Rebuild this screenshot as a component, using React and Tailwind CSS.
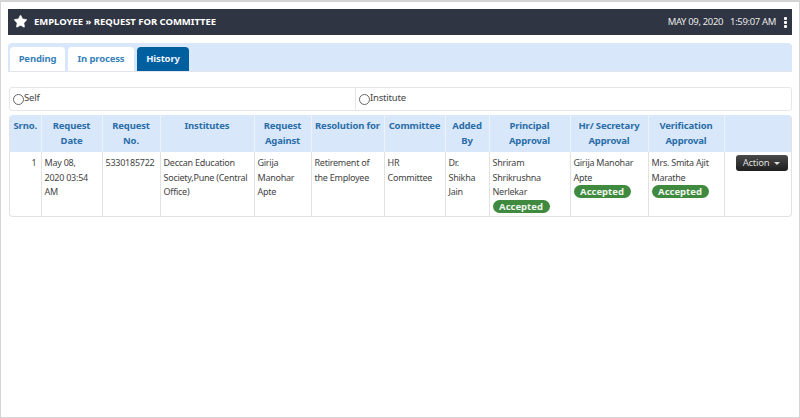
import { Star } from "lucide-react";

const columns = [
  { label: "Srno.", width: "w-[31px]" },
  { label: "Request Date", width: "w-[61px]" },
  { label: "Request No.", width: "w-[58px]" },
  { label: "Institutes", width: "w-[94px]" },
  { label: "Request Against", width: "w-[57px]" },
  { label: "Resolution for", width: "w-[73px]" },
  { label: "Committee", width: "w-[61px]" },
  { label: "Added By", width: "w-[44px]" },
  { label: "Principal Approval", width: "w-[81px]" },
  { label: "Hr/ Secretary Approval", width: "w-[78px]" },
  { label: "Verification Approval", width: "w-[76px]" },
  { label: "", width: "w-[69px]" },
];

const Accepted = () => (
  <span className="block w-[57px] h-[13px] rounded-full bg-[#3f8a3f] text-[#eef5ee] text-[9.5px] leading-[13px] tracking-normal font-bold text-center">
    Accepted
  </span>
);

const Cell = ({ children, className = "" }) => (
  <td className={`border-r border-[#e2e2e2] align-top pl-[3px] pr-[2px] pt-[4px] pb-[3px] last:border-r-0 ${className}`}>
    {children}
  </td>
);

const App = () => {
  return (
    <div className="w-[800px] h-[418px] bg-white border-t-2 border-l border-r border-b border-[#d4d4d4] pt-[7px] pl-[7px] pr-[7px] font-['Noto_Sans',sans-serif] text-[#444] overflow-hidden">

      {/* Title bar */}
      <div className="h-[26px] bg-[#2f3542] flex items-center justify-between text-white pl-[5px] pr-[5px]">
        <div className="flex items-center gap-[6px]">
          <Star size={15} fill="white" strokeWidth={1} className="-mt-[2px]" />
          <span className="text-[9.5px] font-bold tracking-[-0.03px]">EMPLOYEE » REQUEST FOR COMMITTEE</span>
        </div>
        <div className="flex items-center text-[9.5px] text-[#e8e8e8] tracking-[-0.35px]">
          <span className="mr-[7px]">MAY 09, 2020</span>
          <span>1:59:07 AM</span>
          <span className="ml-[8px] flex flex-col gap-[1px]">
            <span className="w-[3px] h-[3px] bg-white rounded-[1px]" />
            <span className="w-[3px] h-[3px] bg-white rounded-[1px]" />
            <span className="w-[3px] h-[3px] bg-white rounded-[1px]" />
          </span>
        </div>
      </div>

      {/* Tabs */}
      <div className="mt-[8px] h-[29px] bg-[#d9e7fb] rounded-t-[4px] border-b border-[#e2e6ec] flex items-end gap-[3px] pl-[2px] text-[9.5px] font-bold tracking-[-0.15px]">
        <div className="h-[24px] w-[55px] bg-white rounded-t-[4px] text-[#3a82b8] flex items-center justify-center">Pending</div>
        <div className="h-[24px] w-[66px] bg-white rounded-t-[4px] text-[#3a82b8] flex items-center justify-center">In process</div>
        <div className="h-[24px] w-[52px] bg-[#005f9f] rounded-t-[4px] text-[#eef4fa] flex items-center justify-center">History</div>
      </div>

      {/* Radio row */}
      <div className="mt-[15px] ml-[1px] h-[24px] border border-[#e6e6e6] rounded-[3px] flex items-center text-[9.5px] tracking-[-0.2px]">
        <label className="w-[345px] pl-[3px] flex items-center">
          <span className="w-[11px] h-[11px] rounded-full border border-[#666] bg-white mt-[1px]" />
          <span className="-mt-[2px]">Self</span>
        </label>
        <label className="border-l border-[#e6e6e6] h-full pl-[3px] flex items-center">
          <span className="w-[11px] h-[11px] rounded-full border border-[#666] bg-white mt-[1px]" />
          <span className="-mt-[2px]">Institute</span>
        </label>
      </div>

      {/* Table */}
      <div className="mt-[4px] ml-[1px] w-[783px] border border-[#e2e2e2] border-t-0 rounded-[4px] overflow-hidden">
        <table className="w-full table-fixed border-collapse text-[9px] leading-[14.5px] tracking-[-0.25px]">
          <thead>
            <tr className="h-[37px] bg-[#d9e7fb] text-[#2a6ea8]">
              {columns.map((col) => (
                <th key={col.label} className={`${col.width} border-r border-[#eef2f8] last:border-r-0 align-top pt-[4px] px-[1px] text-[9.5px] tracking-[-0.15px] font-bold text-center`}>
                  {col.label}
                </th>
              ))}
            </tr>
          </thead>
          <tbody>
            <tr className="h-[64px]">
              <Cell className="text-right !pr-[4px]">1</Cell>
              <Cell>May 08,<br />2020 03:54 AM</Cell>
              <Cell>5330185722</Cell>
              <Cell>Deccan Education<br />Society,Pune (Central Office)</Cell>
              <Cell>Girija<br />Manohar<br />Apte</Cell>
              <Cell>Retirement of the Employee</Cell>
              <Cell>HR Committee</Cell>
              <Cell>Dr. Shikha Jain</Cell>
              <Cell>
                Shriram Shrikrushna Nerlekar
                <Accepted />
              </Cell>
              <Cell>
                Girija Manohar Apte
                <Accepted />
              </Cell>
              <Cell>
                Mrs. Smita Ajit Marathe
                <Accepted />
              </Cell>
              <Cell>
                <button className="-mt-[1px] ml-[8px] w-[52px] h-[16px] rounded-[3px] bg-gradient-to-b from-[#4a4a4a] to-[#1f1f1f] text-[#ddd] text-[9.5px] flex items-center justify-center gap-[5px]">
                  Action
                  <span className="border-x-[3px] border-x-transparent border-t-[3px] border-t-[#ddd]" />
                </button>
              </Cell>
            </tr>
          </tbody>
        </table>
      </div>

    </div>
  );
};

export default App;
